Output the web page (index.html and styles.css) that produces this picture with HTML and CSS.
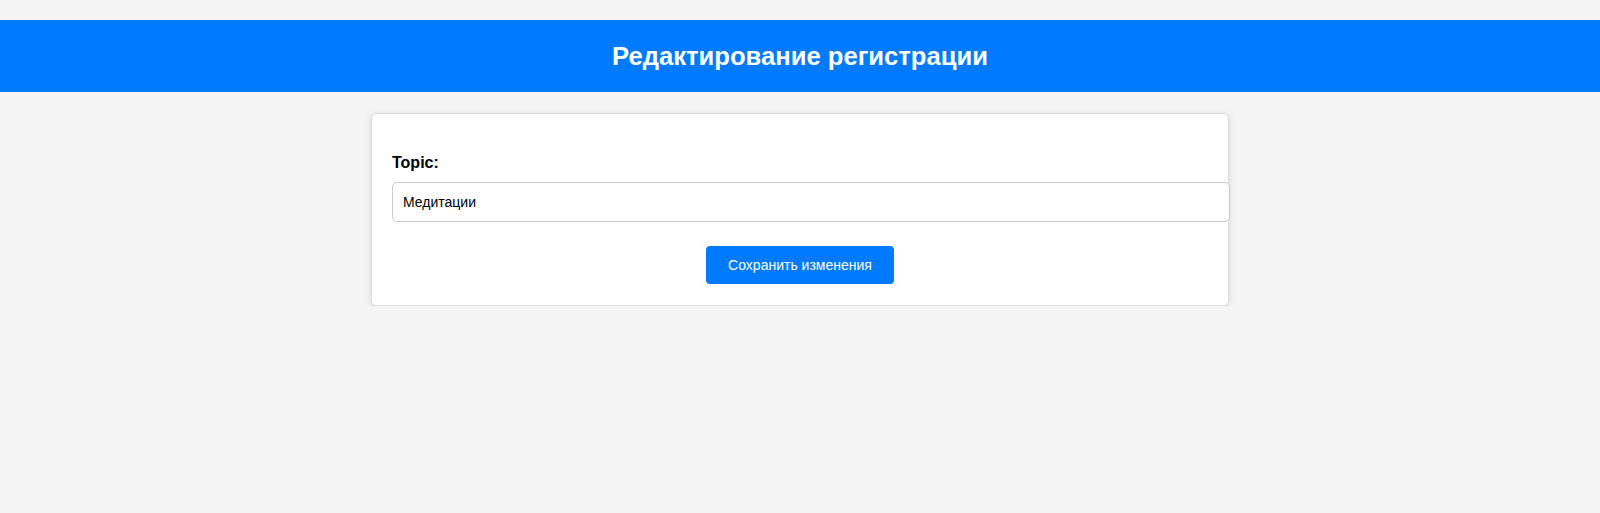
FILE: index.html
```html
<!DOCTYPE html>
<html lang="ru">
<head>
<meta charset="utf-8">
<title>Редактирование регистрации</title>
<link rel="stylesheet" href="styles.css">
</head>
<body>
<header class="page-header">
  <h1 class="page-title">Редактирование регистрации</h1>
</header>
<main class="card">
  <form class="edit-form">
    <label class="field-label" for="topic">Topic:</label>
    <input class="field-input" id="topic" type="text" value="Медитации">
    <div class="actions">
      <button class="btn-primary" type="submit">Сохранить изменения</button>
    </div>
  </form>
</main>
</body>
</html>
```

FILE: styles.css
```css
html, body {
  margin: 0;
  padding: 0;
}
body {
  background: #f4f4f4;
  font-family: "Liberation Sans", Arial, sans-serif;
  color: #000;
  padding-top: 20px;
}
.page-header {
  background: #007bff;
  height: 72px;
  display: flex;
  align-items: center;
  justify-content: center;
}
.page-title {
  margin: 0;
  color: #fff;
  font-size: 25.6px;
  font-weight: bold;
  line-height: 30px;
}
.card {
  display: block;
  width: 816px;
  margin: 21px auto 0;
  padding: 20px 20px 21px;
  background: #fff;
  border: 1px solid #ddd;
  border-radius: 5px;
  box-shadow: 0 2px 6px rgba(0, 0, 0, 0.13);
}
.edit-form {
  margin: 0;
}
.field-label {
  display: block;
  font-size: 16px;
  font-weight: bold;
  line-height: 18px;
  margin: 20px 0 10px;
}
.field-input {
  display: block;
  width: 100%;
  padding: 11px 10px;
  font-family: "Liberation Sans", Arial, sans-serif;
  font-size: 14px;
  line-height: 16px;
  color: #000;
  border: 1px solid #ccc;
  border-radius: 5px;
  margin: 0;
  background: #fff;
}
.actions {
  display: flex;
  justify-content: center;
  margin-top: 24px;
}
.btn-primary {
  background: #007bff;
  color: #fff;
  border: none;
  border-radius: 4px;
  padding: 11px 22px;
  font-family: "Liberation Sans", Arial, sans-serif;
  font-size: 14px;
  line-height: 16px;
  cursor: pointer;
}
```
